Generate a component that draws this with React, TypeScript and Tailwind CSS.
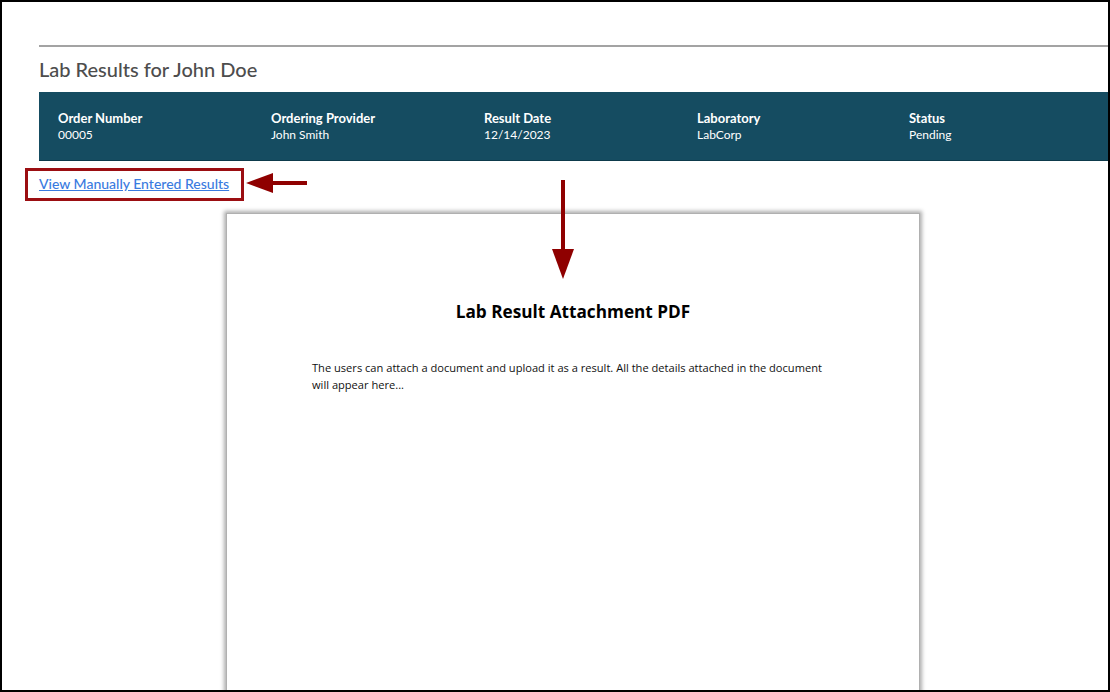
const columns = [
  { label: "Order Number", value: "00005" },
  { label: "Ordering Provider", value: "John Smith" },
  { label: "Result Date", value: "12/14/2023" },
  { label: "Laboratory", value: "LabCorp" },
  { label: "Status", value: "Pending" },
];

export default function App() {
  return (
    <div className="relative w-[1110px] h-[692px] overflow-hidden border-2 border-black bg-white font-['Lato',sans-serif]">
      <div className="pl-[37px] pt-[43px]">
        <div className="h-[2px] bg-[#a3a3a3]" />
        <h1 className="mt-[10px] text-[20px] leading-[24px] font-medium text-[#4d4d4d]">Lab Results for John Doe</h1>

        {/* summary banner */}
        <div className="mt-[11px] h-[69px] bg-[#154c61] border-b border-[#0d3a4b] pl-[19px] pt-[18px] grid grid-cols-[213px_213px_213px_212px_213px]">
          {columns.map((c) => (
            <div key={c.label} className="text-white">
              <div className="text-[13px] leading-[16px] font-bold">{c.label}</div>
              <div className="text-[12px] leading-[17px]">{c.value}</div>
            </div>
          ))}
        </div>

        <div className="mt-[13px] leading-[18px]">
          <a href="#" className="text-[14px] font-medium text-[#3a7be0] underline">
            View Manually Entered Results
          </a>
        </div>

        {/* attachment preview */}
        <div className="ml-[187px] mt-[20px] w-[694px] h-[520px] bg-white border border-[#b0b0b0] shadow-[0_0_4px_2px_rgba(0,0,0,0.32)] pt-[86px] pl-[85px] font-['Open_Sans',sans-serif]">
          <h2 className="w-[522px] text-center text-[17.2px] leading-[24px] font-bold text-black -ml-[85px] pl-[85px] box-content">
            Lab Result Attachment PDF
          </h2>
          <p className="mt-[35px] w-[520px] text-[11.1px] leading-[17px] text-[#111]">
            The users can attach a document and upload it as a result. All the details attached in the document will appear here...
          </p>
        </div>
      </div>

      {/* annotations */}
      <div className="absolute left-[23px] top-[166px] w-[219px] h-[33px] border-[3px] border-[#9b0e12]" />
      <svg className="absolute left-[243px] top-[169px]" width="64" height="26" viewBox="0 0 64 26">
        <polygon points="1,12 28,2 28,22" fill="#8f0000" />
        <rect x="26" y="10" width="36" height="4" fill="#8f0000" />
      </svg>
      <svg className="absolute left-[548px] top-[177px]" width="26" height="102" viewBox="0 0 26 102">
        <rect x="11" y="1" width="4" height="72" fill="#8f0000" />
        <polygon points="2,70 24,70 13,100" fill="#8f0000" />
      </svg>
    </div>
  );
}
